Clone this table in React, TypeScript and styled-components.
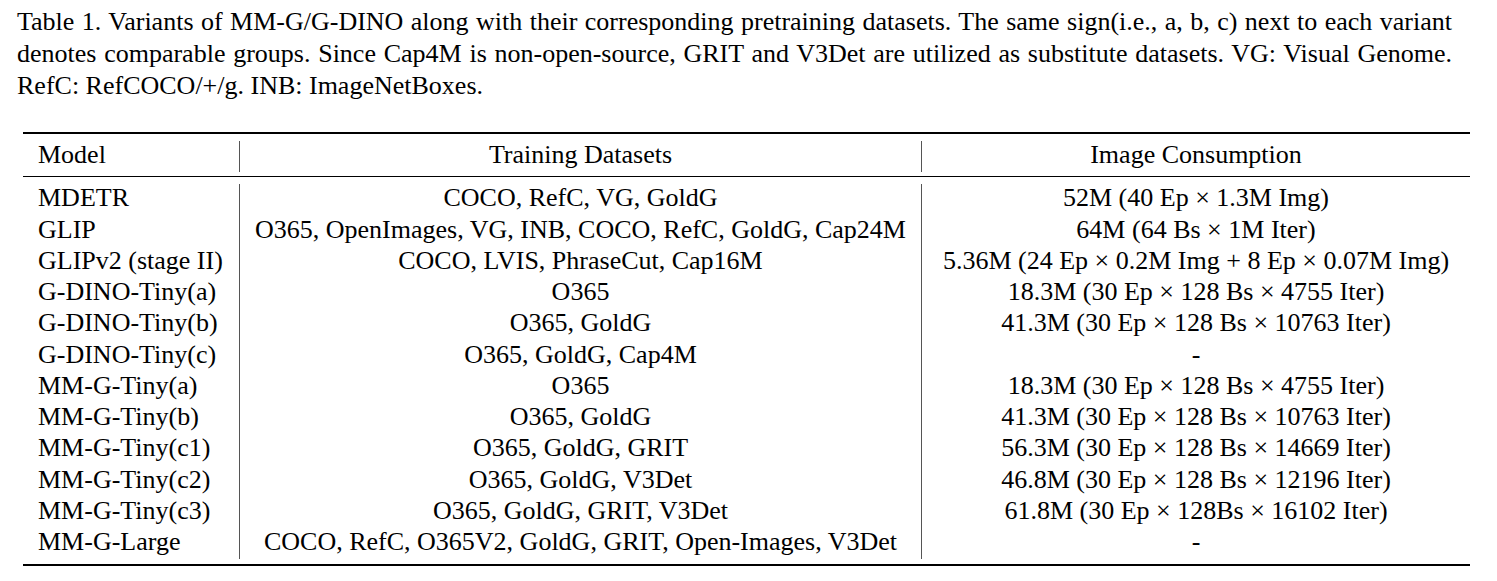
import React from "react";
import styled, { createGlobalStyle } from "styled-components";

const GlobalStyle = createGlobalStyle`
  html, body {
    margin: 0;
    padding: 0;
    background: #ffffff;
  }
  body {
    font-family: "Liberation Serif", "Times New Roman", serif;
    color: #000000;
  }
`;

const Page = styled.div`
  padding-top: 6px;
  width: 1497px;
`;

const Caption = styled.div`
  margin-left: 17px;
  width: 1435px;
  font-size: 26px;
  line-height: 32px;
`;

const CaptionLine = styled.div<{ $justify?: boolean }>`
  white-space: nowrap;
  text-align: ${(p) => (p.$justify ? "justify" : "left")};
  text-align-last: ${(p) => (p.$justify ? "justify" : "left")};
`;

const Table = styled.div`
  margin: 30px 0 0 23px;
  width: 1447px;
  border-top: 2px solid #000;
  border-bottom: 2px solid #000;
  font-size: 26px;
`;

const Section = styled.div<{ $head?: boolean }>`
  padding: 7px 0 ${(p) => (p.$head ? "4px" : "4.5px")};
  border-bottom: ${(p) => (p.$head ? "1px solid #000" : "none")};
`;

const Row = styled.div`
  display: grid;
  grid-template-columns: 216px 682px 1fr;
`;

const Cell = styled.div<{ $center?: boolean; $divider?: boolean }>`
  white-space: nowrap;
  line-height: 28px;
  padding-bottom: 3.25px;
  padding-left: ${(p) => (p.$center ? "0" : "15px")};
  text-align: ${(p) => (p.$center ? "center" : "left")};
  border-left: ${(p) => (p.$divider ? "1px solid #555" : "none")};
`;

type Entry = [string, string, string];

const rows: Entry[] = [
  ["MDETR", "COCO, RefC, VG, GoldG", "52M (40 Ep × 1.3M Img)"],
  ["GLIP", "O365, OpenImages, VG, INB, COCO, RefC, GoldG, Cap24M", "64M (64 Bs × 1M Iter)"],
  ["GLIPv2 (stage II)", "COCO, LVIS, PhraseCut, Cap16M", "5.36M (24 Ep × 0.2M Img + 8 Ep × 0.07M Img)"],
  ["G-DINO-Tiny(a)", "O365", "18.3M (30 Ep × 128 Bs × 4755 Iter)"],
  ["G-DINO-Tiny(b)", "O365, GoldG", "41.3M (30 Ep × 128 Bs × 10763 Iter)"],
  ["G-DINO-Tiny(c)", "O365, GoldG, Cap4M", "-"],
  ["MM-G-Tiny(a)", "O365", "18.3M (30 Ep × 128 Bs × 4755 Iter)"],
  ["MM-G-Tiny(b)", "O365, GoldG", "41.3M (30 Ep × 128 Bs × 10763 Iter)"],
  ["MM-G-Tiny(c1)", "O365, GoldG, GRIT", "56.3M (30 Ep × 128 Bs × 14669 Iter)"],
  ["MM-G-Tiny(c2)", "O365, GoldG, V3Det", "46.8M (30 Ep × 128 Bs × 12196 Iter)"],
  ["MM-G-Tiny(c3)", "O365, GoldG, GRIT, V3Det", "61.8M (30 Ep × 128Bs × 16102 Iter)"],
  ["MM-G-Large", "COCO, RefC, O365V2, GoldG, GRIT, Open-Images, V3Det", "-"],
];

export default function App() {
  return (
    <Page>
      <GlobalStyle />
      <Caption>
        <CaptionLine $justify>
          Table 1. Variants of MM-G/G-DINO along with their corresponding pretraining datasets. The same sign(i.e., a, b, c) next to each variant
        </CaptionLine>
        <CaptionLine $justify>
          denotes comparable groups. Since Cap4M is non-open-source, GRIT and V3Det are utilized as substitute datasets. VG: Visual Genome.
        </CaptionLine>
        <CaptionLine>RefC: RefCOCO/+/g. INB: ImageNetBoxes.</CaptionLine>
      </Caption>
      <Table>
        <Section $head>
          <Row>
            <Cell>Model</Cell>
            <Cell $center $divider>Training Datasets</Cell>
            <Cell $center $divider>Image Consumption</Cell>
          </Row>
        </Section>
        <Section>
          {rows.map(([model, data, cons]) => (
            <Row key={model}>
              <Cell>{model}</Cell>
              <Cell $center $divider>{data}</Cell>
              <Cell $center $divider>{cons}</Cell>
            </Row>
          ))}
        </Section>
      </Table>
    </Page>
  );
}
